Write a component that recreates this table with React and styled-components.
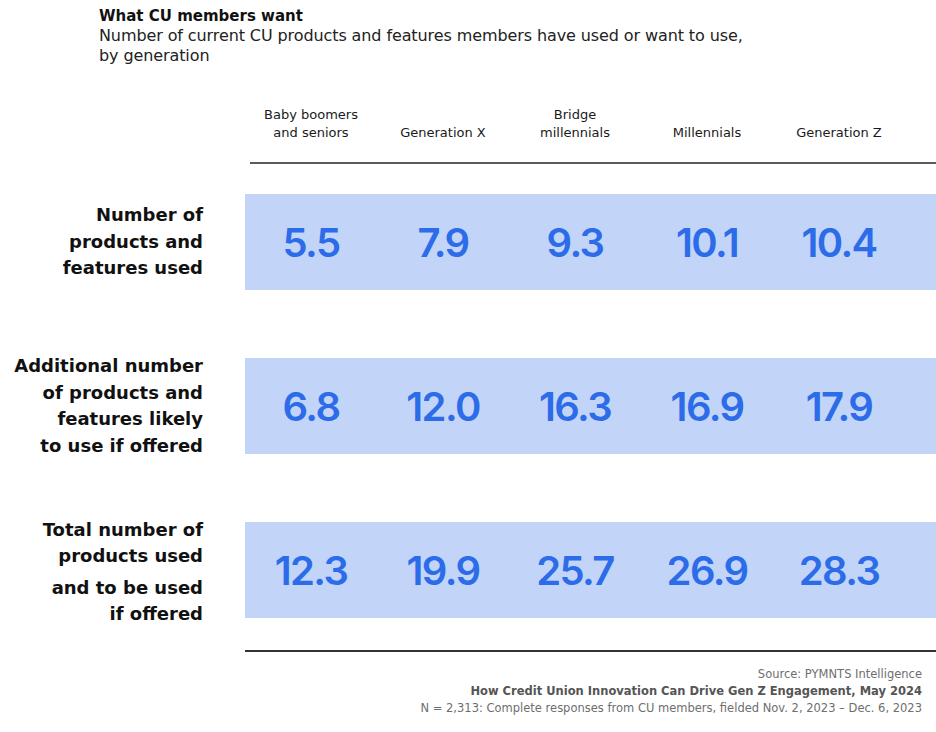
import React from 'react';
import styled, { createGlobalStyle } from 'styled-components';

const generations = [
    ['Baby boomers', 'and seniors'],
    ['Generation X'],
    ['Bridge', 'millennials'],
    ['Millennials'],
    ['Generation Z'],
];

// gapBefore: index of the label line that sits a little lower than the ones before it
const rows = [
    {
        label: ['Number of', 'products and', 'features used'],
        values: ['5.5', '7.9', '9.3', '10.1', '10.4'],
    },
    {
        label: [
            'Additional number',
            'of products and',
            'features likely',
            'to use if offered',
        ],
        values: ['6.8', '12.0', '16.3', '16.9', '17.9'],
    },
    {
        label: ['Total number of', 'products used', 'and to be used', 'if offered'],
        gapBefore: 2,
        values: ['12.3', '19.9', '25.7', '26.9', '28.3'],
    },
];

const App = () => {
    return (
        <Page>
            <GlobalStyle />
            <Heading>
                <Title>What CU members want</Title>
                <Subtitle>
                    Number of current CU products and features members have used or want to use,
                    <br />
                    by generation
                </Subtitle>
            </Heading>

            <HeaderRow>
                {generations.map((lines) => (
                    <HeaderCell key={lines[0]}>
                        {lines.map((l) => (
                            <div key={l}>{l}</div>
                        ))}
                    </HeaderCell>
                ))}
            </HeaderRow>
            <HeaderRule />

            <Rows>
                {rows.map((row) => (
                    <Row key={row.label[0]}>
                        <RowLabel $shift={row.gapBefore !== undefined}>
                            {row.label.map((l, i) => (
                                <LabelLine key={l} $gap={row.gapBefore === i}>
                                    {l}
                                </LabelLine>
                            ))}
                        </RowLabel>
                        <Band>
                            {row.values.map((v, i) => (
                                <Value key={i}>{v}</Value>
                            ))}
                        </Band>
                    </Row>
                ))}
            </Rows>

            <BottomRule />

            <Footer>
                <FootNote>Source: PYMNTS Intelligence</FootNote>
                <FootNote $bold>
                    How Credit Union Innovation Can Drive Gen Z Engagement, May 2024
                </FootNote>
                <FootNote>
                    N = 2,313: Complete responses from CU members, fielded Nov. 2, 2023 – Dec. 6, 2023
                </FootNote>
            </Footer>
        </Page>
    );
};

export default App;

// Styled Components
const GlobalStyle = createGlobalStyle`
    body {
        margin: 0;
        background: #ffffff;
        font-family: "DejaVu Sans", Verdana, sans-serif;
    }
`;

const Page = styled.div`
    width: 936px;
    height: 732px;
    padding-top: 6px;
    box-sizing: border-box;
    overflow: hidden;
    font-family: "DejaVu Sans", Verdana, sans-serif;
`;

const Heading = styled.div`
    margin-left: 99px;
`;

const Title = styled.div`
    font-weight: bold;
    font-size: 15px;
    line-height: 20px;
    color: #111111;
`;

const Subtitle = styled.div`
    font-size: 16px;
    line-height: 20px;
    letter-spacing: -0.1px;
    color: #222222;
`;

const HeaderRow = styled.div`
    display: grid;
    grid-template-columns: repeat(5, 132px);
    align-items: end;
    margin: 40px 0 0 245px;
`;

const HeaderCell = styled.div`
    text-align: center;
    font-size: 13px;
    line-height: 18px;
    color: #1a1a1a;
`;

const HeaderRule = styled.div`
    height: 2px;
    margin: 20px 0 0 250px;
    background: #5c5c5c;
`;

const Rows = styled.div`
    display: flex;
    flex-direction: column;
    gap: 68px;
    margin-top: 30px;
`;

const Row = styled.div`
    display: flex;
    align-items: center;
    height: 96px;
`;

const RowLabel = styled.div`
    width: 245px;
    padding-right: 42px;
    padding-top: ${(p) => (p.$shift ? '4px' : '0')};
    box-sizing: border-box;
    text-align: right;
    font-weight: bold;
    font-size: 18px;
    line-height: 26.5px;
    color: #111111;
`;

const LabelLine = styled.div`
    margin-top: ${(p) => (p.$gap ? '5px' : '0')};
`;

const Band = styled.div`
    flex: 1;
    align-self: stretch;
    display: grid;
    grid-template-columns: repeat(5, 132px);
    align-items: center;
    background: #c2d5f8;
`;

const Value = styled.div`
    text-align: center;
    font-family: Inter, "Noto Sans", sans-serif;
    font-weight: 600;
    font-size: 40px;
    letter-spacing: -1.6px;
    color: #2d6ce8;
`;

const BottomRule = styled.div`
    height: 2px;
    margin: 32px 0 0 245px;
    background: #333333;
`;

const Footer = styled.div`
    display: flex;
    flex-direction: column;
    align-items: flex-end;
    padding: 14px 14px 0 0;
`;

const FootNote = styled.div`
    font-size: 11.5px;
    line-height: 17px;
    font-weight: ${(p) => (p.$bold ? 'bold' : 'normal')};
    color: ${(p) => (p.$bold ? '#555555' : '#6e6e6e')};
`;
